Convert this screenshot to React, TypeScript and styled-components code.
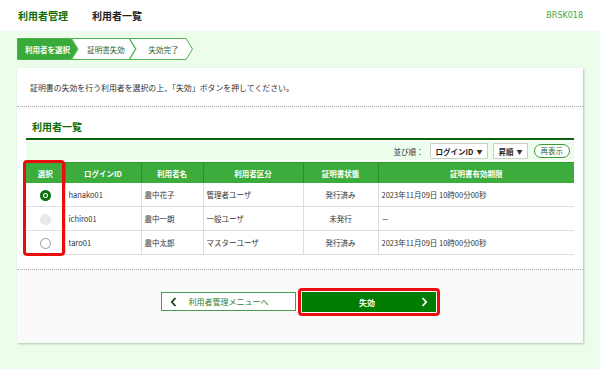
import React from 'react'
import styled, {createGlobalStyle} from 'styled-components'

const GlobalStyle = createGlobalStyle`
  html, body {
    margin: 0;
    padding: 0;
    background: #ecfdeb;
    font-family: "Noto Sans CJK JP", "Noto Sans", sans-serif;
    color: #333;
  }
`

const Page = styled.div`
  width: 600px;
  height: 369px;
  overflow: hidden;
  background: #ecfdeb;
`

const TopBar = styled.header`
  height: 31px;
  background: #fff;
  display: flex;
  align-items: center;
  padding: 0 17px 0 18px;
  box-sizing: border-box;
`

const TopTitle = styled.div<{$accent?: boolean}>`
  font-size: 10px;
  font-weight: bold;
  color: ${p => (p.$accent ? '#0b6e0b' : '#222')};
  margin-right: 24px;
`

const ScreenId = styled.div`
  margin-left: auto;
  font-size: 8px;
  color: #3fa83f;
  font-family: "DejaVu Sans", sans-serif;
`

const Main = styled.main`
  padding: 7px 17px 0;
`

const Steps = styled.div`
  display: flex;
  height: 22px;
`

const Step = styled.div<{$first?: boolean; $width: number}>`
  position: relative;
  width: ${p => p.$width}px;
  height: 22px;
  margin-left: ${p => (p.$first ? 0 : -7)}px;
  display: flex;
  align-items: center;
  justify-content: center;
  padding-left: ${p => (p.$first ? 0 : 5)}px;
  box-sizing: border-box;
  font-size: 7.5px;
  font-weight: ${p => (p.$first ? 'bold' : 'normal')};
  color: ${p => (p.$first ? '#fff' : '#2f5f2f')};

  svg {
    position: absolute;
    inset: 0;
  }

  span {
    position: relative;
  }
`

const Card = styled.section`
  margin-top: 8px;
  background: #fff;
  box-shadow: 1px 1px 2px rgba(60, 100, 60, 0.35);
`

const Lead = styled.p`
  margin: 0;
  padding: 15px 13px 13px;
  font-size: 7.9px;
  line-height: 10px;
  color: #333;
  border-bottom: 1px dotted #aaa;
`

const ListSection = styled.div`
  padding: 13px 9px 14px;
  border-bottom: 1px dotted #aaa;
`

const Heading = styled.h2`
  margin: 0;
  padding: 0 0 5px 6px;
  font-size: 10px;
  line-height: 13px;
  font-weight: bold;
  color: #0b6e0b;
  border-bottom: 2px solid #0b620b;
`

const SortBar = styled.div`
  margin-top: 2px;
  height: 18px;
  background: #ecfdeb;
  display: flex;
  align-items: center;
  justify-content: flex-end;
  gap: 5px;
  padding-right: 4px;
  font-size: 7.5px;
`

const SortLabel = styled.span`
  color: #333;
  margin-right: 1px;
`

const SortSelect = styled.div<{$width: number}>`
  width: ${p => p.$width}px;
  height: 16px;
  box-sizing: border-box;
  border: 1px solid #ccc;
  background: #fff;
  display: flex;
  align-items: center;
  justify-content: space-between;
  padding: 0 4px 0 5px;
  font-size: 7.5px;
  font-weight: bold;
  color: #222;
  border-radius: 1px;
`

const Caret = styled.span`
  font-size: 6px;
  color: #333;
`

const Refresh = styled.button`
  height: 14px;
  padding: 0 6px;
  border: 1px solid #3d9a3d;
  border-radius: 8px;
  background: #fff;
  font-family: inherit;
  font-size: 7.5px;
  color: #2d6a2d;
  line-height: 12px;
  margin-left: 1px;
`

const TableWrap = styled.div`
  position: relative;
  margin-top: 2px;
`

const Table = styled.table`
  width: 548px;
  border-collapse: collapse;
  table-layout: fixed;
  font-size: 7.5px;
`

const Th = styled.th`
  height: 20px;
  padding: 0;
  background: #3cad3c;
  color: #fff;
  font-weight: bold;
  font-size: 7.5px;
  border-left: 1px solid #2f8f2f;
  border-top: 1px solid #2f9a2f;
  &:first-child {
    border-left: none;
  }
`

const Td = styled.td<{$align?: string}>`
  height: 23px;
  padding: 0 ${p => (p.$align === 'center' ? 0 : 3)}px;
  text-align: ${p => p.$align || 'left'};
  border: 1px solid #ddd;
  border-top: none;
  color: #333;
  white-space: nowrap;
  &:first-child {
    border-left: none;
  }
  &:last-child {
    border-right: none;
  }
`

const Radio = styled.span<{$state: 'on' | 'off' | 'disabled'}>`
  display: inline-block;
  width: 11px;
  height: 11px;
  box-sizing: border-box;
  border-radius: 50%;
  vertical-align: middle;
  background: ${p => (p.$state === 'disabled' ? '#e8e8e8' : '#fff')};
  border: ${p =>
    p.$state === 'on' ? '3px solid #0a700a' : p.$state === 'off' ? '1px solid #9a9a9a' : 'none'};
  position: relative;

  &::after {
    content: '';
    display: ${p => (p.$state === 'on' ? 'block' : 'none')};
    position: absolute;
    left: 50%;
    top: 50%;
    width: 3px;
    height: 3px;
    margin: -1.5px 0 0 -1.5px;
    border-radius: 50%;
    background: #0a700a;
  }
`

const Highlight = styled.div`
  position: absolute;
  left: -3px;
  top: -2px;
  width: 42px;
  height: 96px;
  box-sizing: border-box;
  border: 3px solid #e80e0e;
  border-radius: 4px;
  pointer-events: none;
`

const Footer = styled.div`
  background: #fafafa;
  padding: 18px 0 27px;
  display: flex;
  justify-content: center;
  align-items: center;
  gap: 2px;
`

const BackButton = styled.button`
  width: 135px;
  height: 19px;
  box-sizing: border-box;
  border: 1px solid #4c9a4c;
  background: #fff;
  display: flex;
  align-items: center;
  padding: 0 0 0 8px;
  font-family: inherit;
  font-size: 8px;
  color: #2f7a2f;
  margin-top: -1px;

  span {
    flex: 1;
    text-align: center;
    padding-right: 14px;
  }
`

const Emphasis = styled.div`
  border: 3px solid #e80e0e;
  border-radius: 4px;
  padding: 1px;
  background: #fff;
`

const SubmitButton = styled.button`
  width: 134px;
  height: 20px;
  border: none;
  background: #007d00;
  color: #fff;
  display: flex;
  align-items: center;
  padding: 0 8px 0 0;
  font-family: inherit;
  font-size: 8px;
  font-weight: bold;

  span {
    flex: 1;
    text-align: center;
    padding-left: 12px;
  }
`

const Chevron = ({dir, color}: {dir: 'left' | 'right'; color: string}) => (
  <svg width="7" height="10" viewBox="0 0 7 10">
    <path
      d={dir === 'left' ? 'M5.5 1 L1.8 5 L5.5 9' : 'M1.5 1 L5.2 5 L1.5 9'}
      fill="none"
      stroke={color}
      strokeWidth="1.8"
    />
  </svg>
)

const StepShape = ({w, first, filled}: {w: number; first?: boolean; filled?: boolean}) => {
  const h = 22
  const pts = first
    ? `0.5,0.5 ${w - 7},0.5 ${w - 0.5},${h / 2} ${w - 7},${h - 0.5} 0.5,${h - 0.5}`
    : `0.5,0.5 ${w - 7},0.5 ${w - 0.5},${h / 2} ${w - 7},${h - 0.5} 0.5,${h - 0.5} 7,${h / 2}`
  return (
    <svg width={w} height={h} viewBox={`0 0 ${w} ${h}`}>
      <polygon points={pts} fill={filled ? '#3aab3a' : '#fff'} stroke="#4bb24b" strokeWidth="1"/>
    </svg>
  )
}

const steps = [
  {label: '利用者を選択', w: 61},
  {label: '証明書失効', w: 65},
  {label: '失効完了', w: 64}
]

type Row = {
  state: 'on' | 'off' | 'disabled'
  id: string
  name: string
  kind: string
  status: string
  expires: string
}

const rows: Row[] = [
  {state: 'on', id: 'hanako01', name: '農中花子', kind: '管理者ユーザ', status: '発行済み', expires: '2023年11月09日 10時00分00秒'},
  {state: 'disabled', id: 'ichiro01', name: '農中一朗', kind: '一般ユーザ', status: '未発行', expires: '－'},
  {state: 'off', id: 'taro01', name: '農中太郎', kind: 'マスターユーザ', status: '発行済み', expires: '2023年11月09日 10時00分00秒'}
]

const columns = [
  {title: '選択', width: 39},
  {title: 'ログインID', width: 76},
  {title: '利用者名', width: 62},
  {title: '利用者区分', width: 100},
  {title: '証明書状態', width: 75},
  {title: '証明書有効期限', width: 196}
]

const App = () => {
  return (
    <React.Fragment>
      <GlobalStyle/>
      <Page>
        <TopBar>
          <TopTitle $accent>利用者管理</TopTitle>
          <TopTitle>利用者一覧</TopTitle>
          <ScreenId>BRSK018</ScreenId>
        </TopBar>
        <Main>
          <Steps>
            {steps.map((s, i) => (
              <Step key={s.label} $first={i === 0} $width={s.w}>
                <StepShape w={s.w} first={i === 0} filled={i === 0}/>
                <span>{s.label}</span>
              </Step>
            ))}
          </Steps>
          <Card>
            <Lead>証明書の失効を行う利用者を選択の上、「失効」ボタンを押してください。</Lead>
            <ListSection>
              <Heading>利用者一覧</Heading>
              <SortBar>
                <SortLabel>並び順：</SortLabel>
                <SortSelect $width={58}>ログインID<Caret>▼</Caret></SortSelect>
                <SortSelect $width={35}>昇順<Caret>▼</Caret></SortSelect>
                <Refresh type="button">再表示</Refresh>
              </SortBar>
              <TableWrap>
                <Table>
                  <colgroup>
                    {columns.map(c => <col key={c.title} style={{width: c.width}}/>)}
                  </colgroup>
                  <thead>
                    <tr>
                      {columns.map(c => <Th key={c.title}>{c.title}</Th>)}
                    </tr>
                  </thead>
                  <tbody>
                    {rows.map(r => (
                      <tr key={r.id}>
                        <Td $align="center"><Radio $state={r.state}/></Td>
                        <Td>{r.id}</Td>
                        <Td>{r.name}</Td>
                        <Td>{r.kind}</Td>
                        <Td $align="center">{r.status}</Td>
                        <Td>{r.expires}</Td>
                      </tr>
                    ))}
                  </tbody>
                </Table>
                <Highlight/>
              </TableWrap>
            </ListSection>
            <Footer>
              <BackButton type="button">
                <Chevron dir="left" color="#1f3f1f"/>
                <span>利用者管理メニューへ</span>
              </BackButton>
              <Emphasis>
                <SubmitButton type="button">
                  <span>失効</span>
                  <Chevron dir="right" color="#fff"/>
                </SubmitButton>
              </Emphasis>
            </Footer>
          </Card>
        </Main>
      </Page>
    </React.Fragment>
  )
}

export default App
